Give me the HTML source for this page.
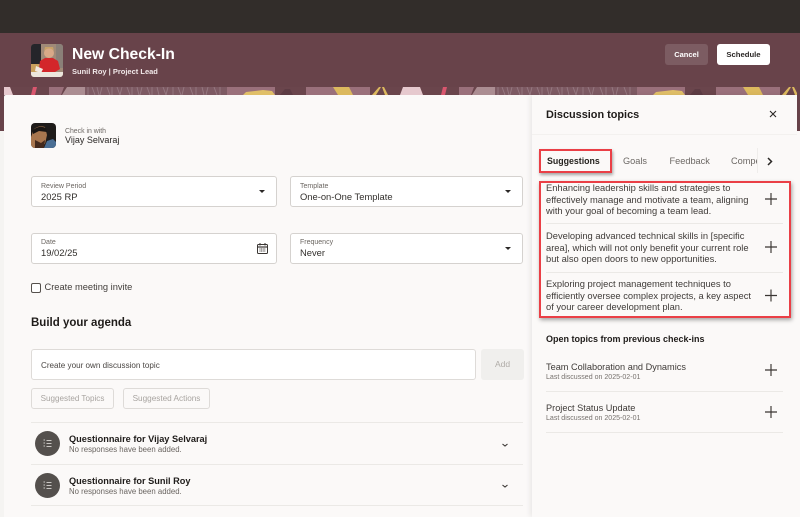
<!DOCTYPE html>
<html lang="en">
<head>
<meta charset="utf-8">
<title>New Check-In</title>
<style>
html,body{margin:0;padding:0}
body{width:800px;height:517px;overflow:hidden;position:relative;background:#f5f4f2;font-family:"Liberation Sans",sans-serif;color:#2b2826}
#w{position:absolute;left:0;top:0;width:800px;height:517px;overflow:hidden;filter:blur(.35px)}
.a{position:absolute;white-space:nowrap}
.field{position:absolute;background:#fff;border:1px solid #d5d2cf;border-radius:3px;box-sizing:border-box;height:31px}
.lb{position:absolute;left:9px;top:5px;font-size:7px;color:#6b6661;line-height:9px}
.val{position:absolute;left:9px;top:13px;font-size:9.4px;line-height:13px;color:#33302d}
.caret{position:absolute;width:0;height:0;border-left:3px solid transparent;border-right:3px solid transparent;border-top:3px solid #2b2826}
.line{position:absolute;height:1px;background:#ebe9e6}
.sug{font-size:9.35px;line-height:11.5px;color:#3f3b38}
.tab{font-size:9.2px;color:#6c6864}
.q{font-size:9.2px;font-weight:bold;color:#1f1c1a;left:69px}
.nr{font-size:7.8px;color:#6a6561;left:69px}
.circ{position:absolute;left:35px;width:25px;height:25px;border-radius:50%;background:#54504d}
</style>
</head>
<body>
<div id="w">
<div class="a" style="left:0;top:0;width:800px;height:33px;background:#322d2a"></div>
<div class="a" style="left:0;top:33px;width:800px;height:98px;background:#68434a"></div>

<svg class="a" style="left:4px;top:87px" width="793" height="9" viewBox="4 87 793 9">
  <rect x="4" y="87" width="793" height="9" fill="#6a454c"/>
  <g id="p">
    <path d="M33 87h4l-2 8h-4z" fill="#d9566e"/>
    <path d="M49 87h15l-3 8H49z" fill="#9a707b"/>
    <path d="M62 95l5-8h18l3 8z" fill="#ab8d92"/>
    <rect x="85" y="87" width="142" height="8" fill="#7d5a63"/>
    <path d="M88 87v8M92 87l3 8M97 87l2 8M102 87l-2 8M107 87l3 8M112 87v8M117 87l3 8M122 87l-2 8M127 87l3 8M132 87v8M137 87l2 8M142 87l-2 8M147 87l3 8M152 87v8M157 87l2 8M163 87l3 8M168 87l-2 8M173 87v8M178 87l3 8M184 87l-2 8M190 87l3 8M196 87v8M202 87l2 8M208 87l-2 8M214 87l3 8M220 87v8" stroke="#977a82" stroke-width=".9"/>
    <rect x="227" y="87" width="48" height="8" fill="#9a707b"/>
    <path d="M243 95l3-3 9-1 8-1 9 1 3 4z" fill="#e0bf68"/>
    <path d="M280 95l5-6 5 0 3 6z" fill="#5d3c44"/>
    <rect x="306" y="87" width="64" height="8" fill="#9a707b"/>
    <path d="M333 87h16l4 8h-15z" fill="#dcb95e"/>
    <path d="M372 95l7-8h2l-5 8z" fill="#dcb95e"/>
    <path d="M382 87h2l4 8h-3z" fill="#dcb95e"/>
    <path d="M400 95l3-8h17l3 8z" fill="#e6c9ce"/>
  </g>
  <use href="#p" x="410"/>
  <use href="#p" x="-410"/>
</svg>

<!-- main card -->
<div class="a" style="left:4px;top:95px;width:793px;height:422px;background:#fbf9f8;border-radius:2px 2px 0 0"></div>
<div class="a" style="left:532px;top:95px;width:265px;height:422px;background:#fbf9f8;box-shadow:-2px 0 5px rgba(0,0,0,.07)"></div>
<div class="a" style="left:797px;top:131px;width:3px;height:386px;background:#fbf9f8"></div>

<!-- header -->
<svg class="a" style="left:31px;top:44px;border-radius:3px" width="32" height="33" viewBox="0 0 32 33">
  <rect width="32" height="33" fill="#a08a78"/>
  <rect width="10" height="20" fill="#25252a"/>
  <rect x="25" width="7" height="24" fill="#8a8078"/>
  <rect y="20" width="8" height="8" fill="#c9a05c"/>
  <rect y="28" width="32" height="5" fill="#ece6dc"/>
  <path d="M8 25l1-8 5-3h8l5 3 2 8-5 3H11z" fill="#d3262a"/>
  <circle cx="18" cy="9" r="5" fill="#d8a988"/>
  <path d="M13 7q5-5 10 0l-1-4h-8z" fill="#c8a268"/>
  <path d="M5 22l7 3-2 4-6-2z" fill="#f1e9e0"/>
</svg>
<div class="a" style="left:72px;top:44px;font-size:15.7px;font-weight:bold;color:#fff;line-height:21px">New Check-In</div>
<div class="a" style="left:72px;top:66px;font-size:7.5px;font-weight:bold;color:#f1e8e9;line-height:11px">Sunil Roy | Project Lead</div>
<div class="a" style="left:665px;top:44px;width:43px;height:21px;background:#7c5c62;border-radius:3px;color:#fff;font-size:7.5px;font-weight:bold;text-align:center;line-height:21px">Cancel</div>
<div class="a" style="left:717px;top:44px;width:53px;height:21px;background:#fff;border-radius:3px;color:#2b2826;font-size:7.7px;font-weight:bold;text-align:center;line-height:21px">Schedule</div>

<!-- check in with -->
<svg class="a" style="left:31px;top:123px;border-radius:4px" width="25" height="25" viewBox="0 0 25 25">
  <rect width="25" height="25" fill="#1e1b1a"/>
  <path d="M3 6q5-4 11-2l2 8-2 9-8 4H0V14z" fill="#a8764e"/>
  <path d="M2 7q6-5 13-2l1 4-8-1-6 3z" fill="#1a1614"/>
  <path d="M4 17l6 3 4-3-1 8H4z" fill="#43291c"/>
  <path d="M13 25l3-7 6-2 3 3v6z" fill="#4a6e94"/>
</svg>
<div class="a" style="left:65px;top:126.5px;font-size:6.9px;color:#6d6864;line-height:10px">Check in with</div>
<div class="a" style="left:65px;top:134px;font-size:9px;color:#2b2826;line-height:13px">Vijay Selvaraj</div>

<!-- form -->
<div class="field" style="left:31px;top:176px;width:246px">
  <div class="lb">Review Period</div><div class="val">2025 RP</div>
  <div class="caret" style="left:227px;top:13px"></div>
</div>
<div class="field" style="left:290px;top:176px;width:233px">
  <div class="lb">Template</div><div class="val">One-on-One Template</div>
  <div class="caret" style="left:214px;top:13px"></div>
</div>
<div class="field" style="left:31px;top:233px;width:246px">
  <div class="lb" style="top:4px">Date</div><div class="val" style="top:12px">19/02/25</div>
  <svg style="position:absolute;left:225px;top:9px" width="12" height="12" viewBox="0 0 12 12" fill="none" stroke="#3a3633">
    <rect x=".5" y="1.5" width="10" height="9" rx="1"/>
    <path d="M.5 4h10" stroke-width="1.2"/>
    <path d="M3 0v2.5M8 0v2.5"/>
    <path d="M2.500 6h6M2.500 8h6" stroke-dasharray="1 .6"/>
  </svg>
</div>
<div class="field" style="left:290px;top:233px;width:233px">
  <div class="lb" style="top:4px">Frequency</div><div class="val" style="top:12px">Never</div>
  <div class="caret" style="left:214px;top:13px"></div>
</div>
<div class="a" style="left:31px;top:283px;width:8px;height:8px;border:1px solid #55504c;border-radius:2px;background:#fff"></div>
<div class="a" style="left:44.5px;top:281px;font-size:9.3px;line-height:13px;color:#44403d">Create meeting invite</div>
<div class="a" style="left:31px;top:316px;font-size:11.5px;font-weight:bold;line-height:15px;color:#1f1c1a">Build your agenda</div>

<div class="field" style="left:31px;top:349px;width:445px;height:31px;border-color:#dedbd8">
  <div class="a" style="left:9px;top:9.5px;font-size:8.1px;line-height:11px;color:#4a4643">Create your own discussion topic</div>
</div>
<div class="a" style="left:481px;top:349px;width:43px;height:31px;background:#f0efed;border-radius:3px;color:#b0aca8;font-size:8.5px;line-height:31px;text-align:center">Add</div>
<div class="a" style="left:31px;top:388px;width:83px;height:21px;box-sizing:border-box;border:1px solid #dedbd8;border-radius:3px;color:#a8a4a0;font-size:8.1px;line-height:19px;text-align:center">Suggested Topics</div>
<div class="a" style="left:123px;top:388px;width:87px;height:21px;box-sizing:border-box;border:1px solid #dedbd8;border-radius:3px;color:#a8a4a0;font-size:8.2px;line-height:19px;text-align:center">Suggested Actions</div>

<div class="line" style="left:31px;top:422px;width:492px"></div>
<div class="line" style="left:31px;top:464px;width:492px"></div>
<div class="line" style="left:31px;top:505px;width:492px"></div>

<div class="circ" style="top:431px"></div>
<svg class="a" style="left:43px;top:439px" width="9" height="9" viewBox="0 0 9 9" fill="none" stroke="#c9c6c3"><path d="M3.500 1.500h5M3.500 4.500h5M3.500 7.500h5M.5 1h1.500M.5 4h1.500M.5 7h1.500"/></svg>
<div class="a q" style="top:433.500px">Questionnaire for Vijay Selvaraj</div>
<div class="a nr" style="top:445px">No responses have been added.</div>
<svg class="a" style="left:502px;top:443px" width="6" height="4" viewBox="0 0 6 4" fill="none" stroke="#3a3633" stroke-width="1.100"><path d="M.5 1l2.500 2L5.500 1"/></svg>

<div class="circ" style="top:473px"></div>
<svg class="a" style="left:43px;top:481px" width="9" height="9" viewBox="0 0 9 9" fill="none" stroke="#c9c6c3"><path d="M3.500 1.500h5M3.500 4.500h5M3.500 7.500h5M.5 1h1.500M.5 4h1.500M.5 7h1.500"/></svg>
<div class="a q" style="top:475.500px">Questionnaire for Sunil Roy</div>
<div class="a nr" style="top:486.500px">No responses have been added.</div>
<svg class="a" style="left:502px;top:484px" width="6" height="4" viewBox="0 0 6 4" fill="none" stroke="#3a3633" stroke-width="1.100"><path d="M.5 1l2.500 2L5.500 1"/></svg>

<!-- right panel -->
<div class="a" style="left:546px;top:108px;font-size:10.900px;font-weight:bold;line-height:15px;color:#1f1c1a">Discussion topics</div>
<svg class="a" style="left:769px;top:110px" width="8" height="8" viewBox="0 0 8 8" stroke="#2b2826" stroke-width="1.100"><path d="M1 1l6 6M7 1L1 7"/></svg>
<div class="line" style="left:532px;top:134px;width:265px;background:#f3f1ef"></div>

<div class="a" style="left:539px;top:149px;width:73px;height:24px;box-sizing:border-box;border:2px solid #ea3f46;box-shadow:1px 2px 3px rgba(0,0,0,.35)"></div>
<div class="a" style="left:547px;top:156px;font-size:8.800px;font-weight:bold;color:#26231f">Suggestions</div>
<div class="a tab" style="left:623px;top:156px">Goals</div>
<div class="a tab" style="left:669.500px;top:156px">Feedback</div>
<div class="a" style="left:731px;top:150px;width:26px;height:20px;overflow:hidden"><span class="tab" style="position:absolute;left:0;top:6px">Competencies</span></div>
<div class="a" style="left:757px;top:148px;width:1px;height:25px;background:#efedeb"></div>
<svg class="a" style="left:767px;top:157px" width="6" height="9" viewBox="0 0 6 9" fill="none" stroke="#2b2826" stroke-width="1.500"><path d="M1 1l3.500 3.500L1 8"/></svg>

<div class="a" style="left:539px;top:181px;width:252px;height:137px;box-sizing:border-box;border:2px solid #ea3f46;box-shadow:1px 2px 4px rgba(0,0,0,.35)"></div>
<div class="a sug" style="left:546px;top:183px">Enhancing leadership skills and strategies to<br>effectively manage and motivate a team, aligning<br>with your goal of becoming a team lead.</div>
<div class="a sug" style="left:546px;top:231px">Developing advanced technical skills in [specific<br>area], which will not only benefit your current role<br>but also open doors to new opportunities.</div>
<div class="a sug" style="left:546px;top:279px">Exploring project management techniques to<br>efficiently oversee complex projects, a key aspect<br>of your career development plan.</div>
<div class="line" style="left:546px;top:223px;width:237px"></div>
<div class="line" style="left:546px;top:272px;width:237px"></div>
<svg class="a" style="left:0;top:0" width="800" height="517" fill="none" stroke="#3a3633" stroke-width="1.150">
  <path d="M765 199h12M771 193v12"/>
  <path d="M765 247h12M771 241v12"/>
  <path d="M765 295.500h12M771 289.500v12"/>
  <path d="M765 370h12M771 364v12"/>
  <path d="M765 412h12M771 406v12"/>
</svg>

<div class="a" style="left:546px;top:333px;font-size:9px;font-weight:bold;line-height:13px;color:#1f1c1a">Open topics from previous check-ins</div>
<div class="a" style="left:546px;top:361px;font-size:9.200px;line-height:12px;color:#3f3b38">Team Collaboration and Dynamics</div>
<div class="a" style="left:546px;top:372.500px;font-size:7.050px;line-height:10px;color:#77726e">Last discussed on 2025-02-01</div>
<div class="line" style="left:546px;top:391px;width:237px"></div>
<div class="a" style="left:546px;top:402px;font-size:9.200px;line-height:12px;color:#3f3b38">Project Status Update</div>
<div class="a" style="left:546px;top:413.500px;font-size:7.050px;line-height:10px;color:#77726e">Last discussed on 2025-02-01</div>
<div class="line" style="left:546px;top:432px;width:237px"></div>
</div>
</body>
</html>
